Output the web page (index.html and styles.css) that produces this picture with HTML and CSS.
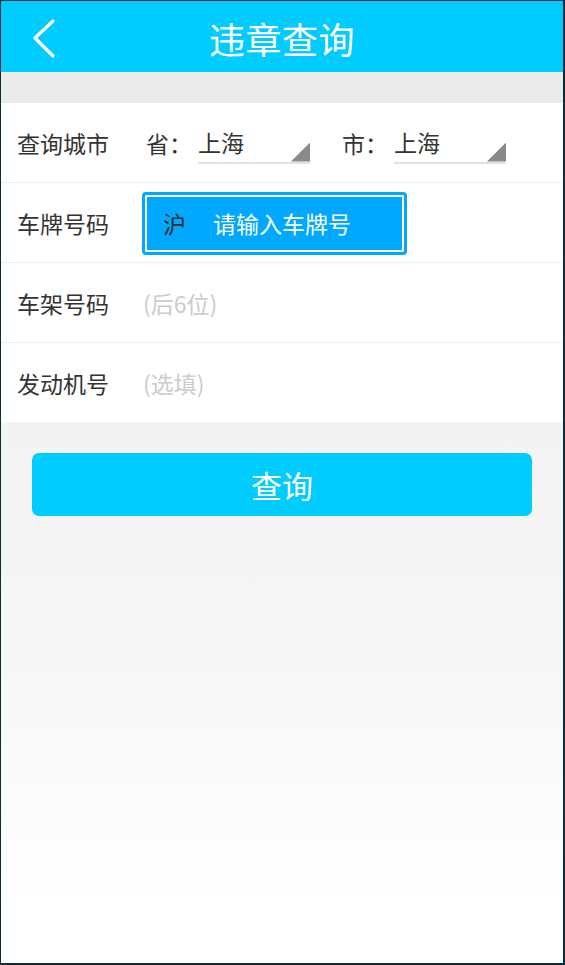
FILE: index.html
```html
<!DOCTYPE html>
<html lang="zh-CN">
<head>
<meta charset="utf-8">
<title>违章查询</title>
<link rel="stylesheet" href="styles.css">
</head>
<body>
<div class="page">
  <header class="topbar">
    <svg class="back" width="24" height="40" viewBox="0 0 24 40">
      <polyline points="21,2 3,19 21,37" fill="none" stroke="#fff" stroke-width="3.2" stroke-linecap="round" stroke-linejoin="round"/>
    </svg>
    <h1 class="title">违章查询</h1>
  </header>
  <div class="band"></div>
  <div class="form">
    <div class="row">
      <span class="label">查询城市</span>
      <div class="cities">
        <span class="pre">省：</span>
        <div class="select"><span class="val">上海</span><span class="tri"></span></div>
        <span class="pre pre2">市：</span>
        <div class="select"><span class="val">上海</span><span class="tri"></span></div>
      </div>
    </div>
    <div class="row">
      <span class="label">车牌号码</span>
      <div class="plate">
        <span class="prov">沪</span>
        <span class="plate-ph">请输入车牌号</span>
      </div>
    </div>
    <div class="row">
      <span class="label">车架号码</span>
      <span class="ph">(后6位)</span>
    </div>
    <div class="row last">
      <span class="label">发动机号</span>
      <span class="ph">(选填)</span>
    </div>
  </div>
  <div class="bottom">
    <div class="btn">查询</div>
  </div>
</div>
</body>
</html>
```

FILE: styles.css
```css
html, body {
  margin: 0;
  padding: 0;
}
body {
  background: #0c2a3a;
  width: 565px;
  height: 965px;
  overflow: hidden;
  font-family: "Noto Sans CJK SC", "Noto Sans", sans-serif;
}
.page {
  margin: 1px 2px 0 1px;
  height: 962px;
  display: flex;
  flex-direction: column;
  background: #fff;
}
.topbar {
  height: 71px;
  background: #00ccff;
  display: flex;
  align-items: center;
  justify-content: center;
  position: relative;
}
.back {
  position: absolute;
  left: 31px;
  top: 18px;
}
.title {
  margin: 0;
  font-weight: 400;
  font-size: 36px;
  color: #fff;
  line-height: 1;
  margin-top: 2px;
  letter-spacing: 0.5px;
}
.band {
  height: 31px;
  background: #ebebeb;
}
.form {
  background: #fff;
}
.row {
  height: 79px;
  border-bottom: 1px solid #eeeeee;
  display: flex;
  align-items: center;
  padding-left: 16px;
}
.row.last {
  border-bottom: none;
}
.label {
  width: 125px;
  font-size: 23px;
  color: #333;
  flex-shrink: 0;
}
.cities {
  display: flex;
  align-items: center;
}
.pre {
  font-size: 23px;
  color: #333;
  margin-left: 4px;
  width: 52px;
}
.pre2 {
  margin-left: 32px;
  width: 52px;
}
.select {
  width: 112px;
  height: 38px;
  border-bottom: 2px solid #e2e2e2;
  display: flex;
  justify-content: space-between;
  align-items: center;
  margin-top: 2px;
}
.val {
  font-size: 23px;
  color: #333;
  line-height: 1;
}
.tri {
  align-self: flex-end;
  width: 19px;
  height: 19px;
  background: #8a8a8a;
  clip-path: polygon(100% 0, 100% 100%, 0 100%);
}
.plate {
  width: 265px;
  height: 63px;
  box-sizing: border-box;
  background: #00a9ff;
  border: 3px solid #00a9ff;
  border-radius: 4px;
  box-shadow: inset 0 0 0 2px #fff;
  display: flex;
  align-items: center;
  padding-left: 18px;
  margin-top: 1px;
  font-size: 23px;
}
.prov {
  color: #2a2a2a;
  width: 50px;
}
.plate-ph {
  color: #fff;
}
.ph {
  font-size: 23px;
  color: #cccccc;
  margin-left: 1px;
}
.bottom {
  flex: 1;
  background: linear-gradient(#f3f3f3, #f6f6f6 40%, #ffffff 90%);
  padding: 31px 31px 0 31px;
}
.btn {
  height: 63px;
  border-radius: 7px;
  background: #00ccff;
  color: #fff;
  font-size: 31px;
  display: flex;
  align-items: center;
  justify-content: center;
}
```
